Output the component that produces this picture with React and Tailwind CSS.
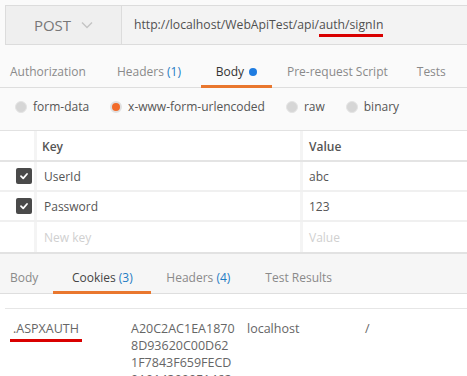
import React from "react";

const Check = () => (
  <div className="w-[16px] h-[16px] rounded-[2px] bg-[#4a4a4a] flex items-center justify-center">
    <svg width="10" height="10" viewBox="0 0 10 10">
      <path d="M2 5.2 L4.2 7.3 L8 3" stroke="#fff" strokeWidth="1.8" fill="none" strokeLinecap="round" strokeLinejoin="round" />
    </svg>
  </div>
);

const Radio = ({ on, label }) => (
  <div className="flex items-center gap-[6px] whitespace-nowrap">
    <div
      className={
        "w-[12px] h-[12px] rounded-full " +
        (on ? "bg-[#f26b2a] border-[2px] border-[#e0e0e0]" : "bg-[#d6d6d6] border border-[#e4e4e4]")
      }
    />
    <span>{label}</span>
  </div>
);

export default function App() {
  return (
    <div
      className="w-[467px] h-[376px] overflow-hidden bg-[#fafafa] text-[#505050] text-[12px] whitespace-nowrap"
      style={{ fontFamily: '"Open Sans", "Noto Sans", sans-serif' }}
    >
      {/* request bar */}
      <div className="pt-[5px] pl-[5px]">
        <div className="flex h-[40px] border border-[#dcdcdc] border-r-0 bg-[#f3f3f3]">
          <div className="w-[116px] flex items-center justify-center gap-[10px] border-r border-[#dcdcdc] bg-[#efefef] text-[#777] text-[15px]">
            <span>POST</span>
            <svg width="12" height="8" viewBox="0 0 12 8">
              <path d="M1 1.5 L6 6.5 L11 1.5" stroke="#c4c4c4" strokeWidth="1.4" fill="none" />
            </svg>
          </div>
          <div className="flex items-center pl-[12px] text-[#505050] text-[12.2px]">
            <span>
              http://localhost/WebApiTest/api/
              <span className="relative">
                auth/signIn
                <span className="absolute left-0 right-0 bottom-[-4px] h-[3px] bg-[#d90000]" />
              </span>
            </span>
          </div>
        </div>
      </div>

      {/* tabs */}
      <div className="mt-[11px] flex h-[32px] border-b border-[#dedede] text-[#8a8a8a]">
        <div className="pl-[10px] pr-[31px] flex items-center">Authorization</div>
        <div className="pr-[20px] flex items-center">
          Headers&nbsp;<span className="text-[#1f7cc4]">(1)</span>
        </div>
        <div className="relative w-[71px] flex items-center justify-center gap-[5px] text-[#333]">
          Body
          <span className="w-[8px] h-[8px] rounded-full bg-[#1f7ce0]" />
          <span className="absolute left-0 right-0 bottom-[-1px] h-[3px] bg-[#e9772e]" />
        </div>
        <div className="pl-[15px] pr-[29px] flex items-center">Pre-request Script</div>
        <div className="flex items-center">Tests</div>
      </div>

      {/* radios */}
      <div className="flex items-center h-[38px] pl-[15px] gap-[21px] text-[#555]">
        <Radio label="form-data" />
        <Radio on label="x-www-form-urlencoded" />
        <Radio label="raw" />
        <Radio label="binary" />
      </div>

      {/* table */}
      <div className="mt-[4px] border-t border-b-[2px] border-[#e2e2e2] bg-white">
        <div className="flex h-[31px] border-b-[2px] border-[#e4e4e4] font-semibold text-[#555]">
          <div className="w-[37px] border-r-[3px] border-[#f4f4f4]" />
          <div className="w-[266px] pl-[5px] pt-[2px] flex items-center border-r-[3px] border-[#f4f4f4]">Key</div>
          <div className="pl-[6px] pt-[2px] flex items-center">Value</div>
        </div>
        {[
          ["UserId", "abc", true],
          ["Password", "123", true],
          ["New key", "Value", false],
        ].map(([k, v, c], i) => (
          <div
            key={i}
            className={"flex h-[30px] " + (i < 2 ? "border-b-[2px] border-[#f0f0f0]" : "")}
          >
            <div className="w-[37px] flex items-center pl-[16px] border-r-[3px] border-[#f4f4f4]">
              {c && <Check />}
            </div>
            <div
              className={
                "w-[266px] pl-[7px] pt-[1px] flex items-center border-r-[3px] border-[#f4f4f4] " +
                (c ? "text-[#555]" : "text-[#d0d0d0]")
              }
            >
              {k}
            </div>
            <div className={"pl-[6px] pt-[1px] flex items-center " + (c ? "text-[#555]" : "text-[#d0d0d0]")}>{v}</div>
          </div>
        ))}
      </div>

      {/* response tabs */}
      <div className="flex h-[40px] pt-[8px] border-b border-[#dedede] bg-[#f6f6f6] text-[#8a8a8a]">
        <div className="pl-[10px] pr-[15px] flex items-center">Body</div>
        <div className="relative w-[98px] flex items-center justify-center text-[#444]">
          Cookies&nbsp;<span className="text-[#1f7cc4]">(3)</span>
          <span className="absolute left-0 right-0 bottom-[-1px] h-[3px] bg-[#e9772e]" />
        </div>
        <div className="pl-[15px] pr-[35px] flex items-center">
          Headers&nbsp;<span className="text-[#1f7cc4]">(4)</span>
        </div>
        <div className="flex items-center">Test Results</div>
      </div>

      {/* cookies */}
      <div className="bg-white h-[100px]">
        <div className="ml-[5px] pt-[14px] border-b border-[#e6e6e6]" />
        <div className="flex pt-[11px] text-[#666] text-[12.5px] leading-[17px]">
          <div className="w-[131px] pl-[13px]">
            <span className="relative">
              .ASPXAUTH
              <span className="absolute left-[-3px] right-[-3px] bottom-[-5px] h-[3px] bg-[#d90000]" />
            </span>
          </div>
          <div className="w-[116px]">
            <div>A20C2AC1EA1870</div>
            <div>8D93620C00D62</div>
            <div>1F7843F659FECD</div>
            <div>0A0143000E1462</div>
          </div>
          <div className="w-[118px]">localhost</div>
          <div>/</div>
        </div>
      </div>
    </div>
  );
}
